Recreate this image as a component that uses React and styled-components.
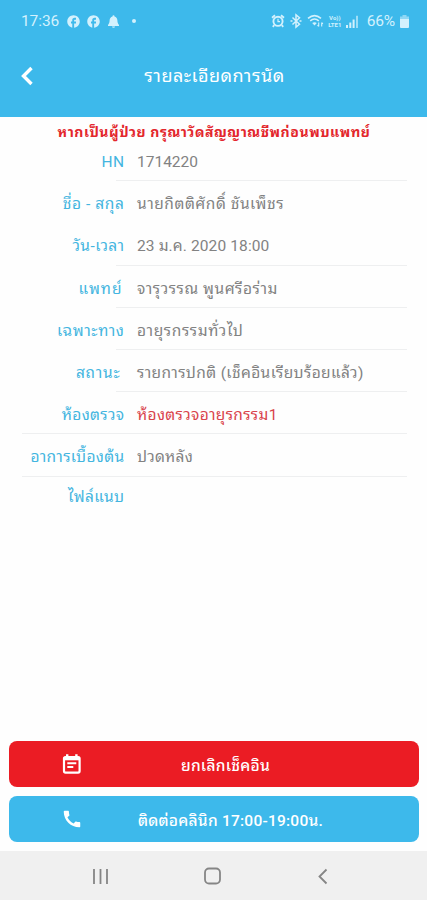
import React from 'react';
import styled, { createGlobalStyle } from 'styled-components';
import { MdCall, MdFacebook } from 'react-icons/md';

const GlobalStyle = createGlobalStyle`
	:root {
		--mainBlue: #3db9eb;
		--mainRed: #eb1c24;
	}
	* {
		box-sizing: border-box;
	}
	body {
		margin: 0;
		background: #fff;
		font-family: Roboto, "Noto Sans Thai Looped", "Droid Sans Thai", Loma, Umpush, Waree, Garuda, "Noto Sans Thai", "Noto Sans", sans-serif;
	}
`;

const Screen = styled.div`
	display: flex;
	flex-direction: column;
	width: 427px;
	height: 900px;
	overflow: hidden;
	background: #fefefe;
`;

const Header = styled.header`
	height: 117px;
	flex: none;
	background: var(--mainBlue);
	color: #fff;
`;

const StatusBar = styled.div`
	display: flex;
	align-items: center;
	justify-content: space-between;
	height: 42px;
	padding: 0 18px 0 21px;
	color: #d3f1fd;
	font-size: 15.5px;
`;

const StatusGroup = styled.div`
	display: flex;
	align-items: center;
	gap: ${props => props.$gap}px;
	svg {
		display: block;
	}
`;

const Clock = styled.span`
	margin-right: 2px;
	letter-spacing: -0.1px;
`;

const Dot = styled.span`
	width: 4px;
	height: 4px;
	margin-left: 6px;
	border-radius: 50%;
	background: currentColor;
`;

const Network = styled.span`
	display: flex;
	flex-direction: column;
	align-items: center;
	width: 16px;
	font-size: 6px;
	font-weight: 700;
	line-height: 7px;
`;

const Percent = styled.span`
	margin: 0 2px 0 5px;
	letter-spacing: -0.2px;
`;

const TitleBar = styled.div`
	display: grid;
	grid-template-columns: 54px 1fr 52px;
	align-items: center;
	height: 68px;
`;

const BackButton = styled.button`
	display: flex;
	padding: 0 0 0 20px;
	border: none;
	background: transparent;
	color: inherit;
`;

const Title = styled.h1`
	margin: 0;
	text-align: center;
	font-size: 18px;
	font-weight: 400;
	line-height: 24px;
	white-space: nowrap;
	letter-spacing: 0.5px;
`;

const Notice = styled.p`
	flex: none;
	height: 22px;
	margin: 0;
	padding: 4px 0 0 1px;
	color: #e3262c;
	text-align: center;
	font-size: 14px;
	font-weight: 700;
	line-height: 22px;
	white-space: nowrap;
	letter-spacing: 0.55px;
`;

const Details = styled.dl`
	flex: 1;
	margin: 0;
`;

const Row = styled.div`
	display: grid;
	grid-template-columns: 102.5px 1fr;
	column-gap: 12.5px;
	align-items: center;
	height: 42.2px;
	margin: 0 20px 0 22px;
	padding-top: 4px;
	white-space: nowrap;
	font-size: 15.5px;
	line-height: 24px;
	background: linear-gradient(#eeeff0, #eeeff0) no-repeat right bottom;
	background-size: ${props => props.$line} 1px;
	&:last-child {
		height: 36px;
	}
`;

const Label = styled.dt`
	color: #43b5e0;
	text-align: right;
	padding-right: ${props => props.$inset || 0}px;
	letter-spacing: ${props => props.$spacing || 0}px;
`;

const Value = styled.dd`
	margin: 0;
	color: ${props => (props.$alert ? '#d9434b' : '#828282')};
	letter-spacing: ${props => props.$spacing || 0}px;
`;

const Actions = styled.div`
	display: flex;
	flex-direction: column;
	flex: none;
	gap: 9px;
	padding: 0 8px 9px 9px;
`;

const ActionButton = styled.button`
	display: grid;
	grid-template-columns: 1fr auto 1fr;
	align-items: center;
	height: 46px;
	padding: 0 0 0 52px;
	border: none;
	border-radius: 8px;
	background: ${props => (props.$danger ? 'var(--mainRed)' : 'var(--mainBlue)')};
	color: #fff;
	font-family: inherit;
	font-size: 15.5px;
	font-weight: 500;
	svg {
		display: block;
	}
`;

const ActionText = styled.span`
	margin-left: ${props => props.$offset}px;
	white-space: nowrap;
	letter-spacing: 0.24px;
`;

const NavBar = styled.nav`
	display: flex;
	align-items: center;
	justify-content: space-between;
	flex: none;
	height: 49px;
	padding: 1px 98px 0 92px;
	background: #f0f0f0;
`;

// spacing: [label, value] letter-spacing in px
const rows = [
	{ label: 'HN', value: '1714220', line: '291px', spacing: [0.5, 0] },
	{ label: 'ชื่อ - สกุล', value: 'นายกิตติศักดิ์ ชันเพ็ชร', line: '0', spacing: [0.6, 0.55] },
	{ label: 'วัน-เวลา', value: '23 ม.ค. 2020 18:00', line: '291px', spacing: [0.45, 0.12] },
	{ label: 'แพทย์', value: 'จารุวรรณ พูนศรีอร่าม', line: '291px', inset: 2, spacing: [1, 0.55] },
	{ label: 'เฉพาะทาง', value: 'อายุรกรรมทั่วไป', line: '291px', spacing: [0.6, 0.62] },
	{ label: 'สถานะ', value: 'รายการปกติ (เช็คอินเรียบร้อยแล้ว)', line: '291px', inset: 4, spacing: [0.8, 0.38] },
	{ label: 'ห้องตรวจ', value: 'ห้องตรวจอายุรกรรม1', line: '100%', alert: true, spacing: [0.35, 0.34] },
	{ label: 'อาการเบื้องต้น', value: 'ปวดหลัง', line: '100%', spacing: [0.35, 0.25] },
	{ label: 'ไฟล์แนบ', value: '', line: '0', spacing: [0.4, 0] }
];

const BellIcon = () => (
	<svg width="15" height="15" viewBox="0 0 15 15" fill="currentColor">
		<path d="M7.5 1.2a1 1 0 0 1 1 1v.4c1.9.5 2.8 2 2.9 4 .1 2.3.6 3.2 1.6 4.3v1H2v-1c1-1.1 1.5-2 1.600-4.300.1-2 1-3.500 2.900-4v-.4a1 1 0 0 1 1-1zM6 12.600h3a1.500 1.200 0 0 1-3 0z" />
	</svg>
);

const AlarmIcon = () => (
	<svg width="14" height="14" viewBox="0 0 14 14" fill="none" stroke="currentColor">
		<circle cx="7" cy="7.3" r="4.6" strokeWidth="1.9" />
		<path d="M7 4.8v2.8h2" strokeWidth="1.2" />
		<path d="M1 3.8L4 1.3M13 3.8L10 1.3M3.2 11.2l-1.4 1.6M10.8 11.2l1.4 1.6" strokeWidth="1.8" />
	</svg>
);

const BluetoothIcon = () => (
	<svg width="16" height="16" viewBox="0 0 16 16" fill="none" stroke="currentColor">
		<path d="M4.5 4.5l7 6.8L8 14.2V1.800l3.500 2.900-7 6.800" strokeWidth="1.500" />
		<path d="M2.500 8h2M11.500 8h2" strokeWidth="1.600" />
	</svg>
);

const WifiIcon = () => (
	<svg width="17" height="14" viewBox="0 0 17 14" fill="none" stroke="currentColor">
		<path d="M1 4.4c4-3.4 9-3.4 13 0M3.2 6.8c2.8-2.2 5.9-2.2 8.6 0" strokeWidth="1.5" />
		<path d="M5.2 9l2.3 2.4L9.8 9C8.3 8 6.7 8 5.2 9z" fill="currentColor" stroke="none" />
		<path d="M11.7 8.5v4M10.5 11.2l1.2 1.3M14.7 12.5v-4M14.7 8.5l1.2 1.3" strokeWidth="1.1" />
	</svg>
);

const SignalIcon = () => (
	<svg width="13" height="13" viewBox="0 0 13 13" fill="currentColor">
		<path d="M0 10h2v3H0zM3.3 7.5h2V13h-2zM6.6 4.5h2V13h-2z" />
		<path d="M10 .8h2V13h-2z" opacity=".65" />
	</svg>
);

const BatteryIcon = () => (
	<svg width="9" height="13" viewBox="0 0 9 13" fill="currentColor">
		<path d="M2.5 0h4v1.5H9V5H0V1.5h2.5z" opacity=".55" />
		<path d="M0 4h9v8a1 1 0 0 1-1 1H1a1 1 0 0 1-1-1z" />
	</svg>
);

const CalendarIcon = () => (
	<svg width="22" height="22" viewBox="0 0 22 22" fill="none" stroke="currentColor">
		<rect x="3" y="4" width="15.6" height="15.6" rx="1.5" strokeWidth="2.2" />
		<path d="M2.8 5.6h16" strokeWidth="3.4" />
		<path d="M6.2 1.3v3M15.4 1.3v3" strokeWidth="2.4" />
		<path d="M6.3 10.3h9M6.3 14.1h6" strokeWidth="2" />
	</svg>
);

const App = () => {
	return (
		<Screen>
			<GlobalStyle />
			<Header>
				<StatusBar>
					<StatusGroup $gap={5}>
						<Clock>17:36</Clock>
						<MdFacebook size={15} />
						<MdFacebook size={15} />
						<BellIcon />
						<Dot />
					</StatusGroup>
					<StatusGroup $gap={3}>
						<AlarmIcon />
						<BluetoothIcon />
						<WifiIcon />
						<Network>
							<span>Vo))</span>
							<span>LTE1</span>
						</Network>
						<SignalIcon />
						<Percent>66%</Percent>
						<BatteryIcon />
					</StatusGroup>
				</StatusBar>
				<TitleBar>
					<BackButton aria-label="back">
						<svg width="14" height="20" viewBox="0 0 14 20" fill="none" stroke="currentColor" strokeWidth="3.4">
							<path d="M11.5 2L3.5 10l8 8" />
						</svg>
					</BackButton>
					<Title>รายละเอียดการนัด</Title>
				</TitleBar>
			</Header>
			<Notice>หากเป็นผู้ป่วย กรุณาวัดสัญญาณชีพก่อนพบแพทย์</Notice>
			<Details>
				{rows.map(row => (
					<Row key={row.label} $line={row.line}>
						<Label $inset={row.inset} $spacing={row.spacing[0]}>{row.label}</Label>
						<Value $alert={row.alert} $spacing={row.spacing[1]}>{row.value}</Value>
					</Row>
				))}
			</Details>
			<Actions>
				<ActionButton $danger>
					<CalendarIcon />
					<ActionText $offset={-29}>ยกเลิกเช็คอิน</ActionText>
				</ActionButton>
				<ActionButton>
					<MdCall size={22} />
					<ActionText $offset={-19}>ติดต่อคลินิก 17:00-19:00น.</ActionText>
				</ActionButton>
			</Actions>
			<NavBar>
				<svg width="17" height="17" viewBox="0 0 17 17" stroke="#858585" strokeWidth="1.8">
					<path d="M2 1v15M8.5 1v15M15 1v15" />
				</svg>
				<svg width="18" height="18" viewBox="0 0 18 18" fill="none" stroke="#858585" strokeWidth="1.8">
					<rect x="1" y="1.5" width="15" height="15" rx="4" />
				</svg>
				<svg width="12" height="17" viewBox="0 0 12 17" fill="none" stroke="#858585" strokeWidth="1.8">
					<path d="M9.5 1.5l-7 7 7 7" />
				</svg>
			</NavBar>
		</Screen>
	);
};

export default App;
